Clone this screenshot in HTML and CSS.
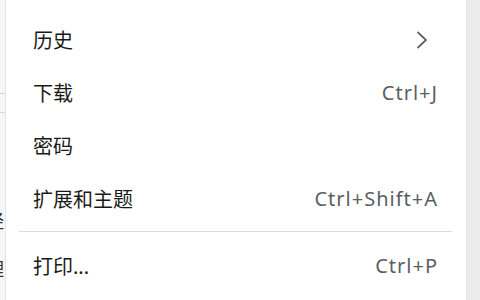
FILE: index.html
```html
<!DOCTYPE html>
<html lang="zh-CN">
<head>
    <meta charset="UTF-8">
    <meta name="viewport" content="width=device-width, initial-scale=1.0">
    <link rel="stylesheet" href="styles.css">
    <title>菜单</title>
</head>
<body>
    <div class="page">
        <div class="page-edge">
            <div class="edge-line"></div>
            <div class="edge-line second"></div>
            <div class="edge-text first">经</div>
            <div class="edge-text">理</div>
        </div>

        <div class="menu">
            <div class="menu-item">
                <span class="label">历史</span>
                <svg class="chevron" width="12" height="20" viewBox="0 0 12 20">
                    <path d="M1.5 2 L10 10 L1.5 18" fill="none" stroke="#5f6368" stroke-width="1.8"/>
                </svg>
            </div>
            <div class="menu-item">
                <span class="label">下载</span>
                <span class="shortcut">Ctrl+J</span>
            </div>
            <div class="menu-item">
                <span class="label">密码</span>
            </div>
            <div class="menu-item">
                <span class="label">扩展和主题</span>
                <span class="shortcut">Ctrl+Shift+A</span>
            </div>
            <div class="separator"></div>
            <div class="menu-item">
                <span class="label">打印...</span>
                <span class="shortcut">Ctrl+P</span>
            </div>
        </div>

        <div class="scrollbar"></div>
    </div>
</body>
</html>
```

FILE: styles.css
```css
body {
    margin: 0;
    padding: 0;
    font-family: "Noto Sans", "Noto Sans CJK SC", sans-serif;
    background-color: #ffffff;
}

.page {
    display: flex;
    width: 480px;
    height: 300px;
    overflow: hidden;
}

.page-edge {
    width: 5px;
    background-color: #f6f6f6;
    border-right: 1px solid #e4e4e4;
    display: flex;
    flex-direction: column;
    align-items: flex-end;
    overflow: hidden;
}

.edge-line {
    width: 100%;
    height: 1px;
    margin-top: 93px;
    background-color: #d6d6dc;
}

.edge-line.second {
    margin-top: 18px;
}

.edge-text {
    font-size: 18px;
    line-height: 20px;
    color: #333;
    white-space: nowrap;
    margin-right: 1px;
    margin-top: 28px;
}

.edge-text.first {
    margin-top: 98px;
}

.menu {
    flex: 1;
    background-color: #ffffff;
    padding-top: 13px;
}

.menu-item {
    display: flex;
    align-items: center;
    justify-content: space-between;
    height: 53px;
    padding-left: 27px;
    padding-right: 28px;
    color: #1a1a1a;
}

.label {
    font-size: 20px;
}

.shortcut {
    font-size: 20px;
    letter-spacing: 1px;
    color: #5b5e63;
}

.chevron {
    margin-right: 10px;
}

.separator {
    height: 1px;
    background-color: #dcdcdc;
    margin: 6px 14px 7px 13px;
}

.scrollbar {
    width: 13px;
    background-color: #ececec;
    border-left: 1px solid #e2e2e2;
}
```
